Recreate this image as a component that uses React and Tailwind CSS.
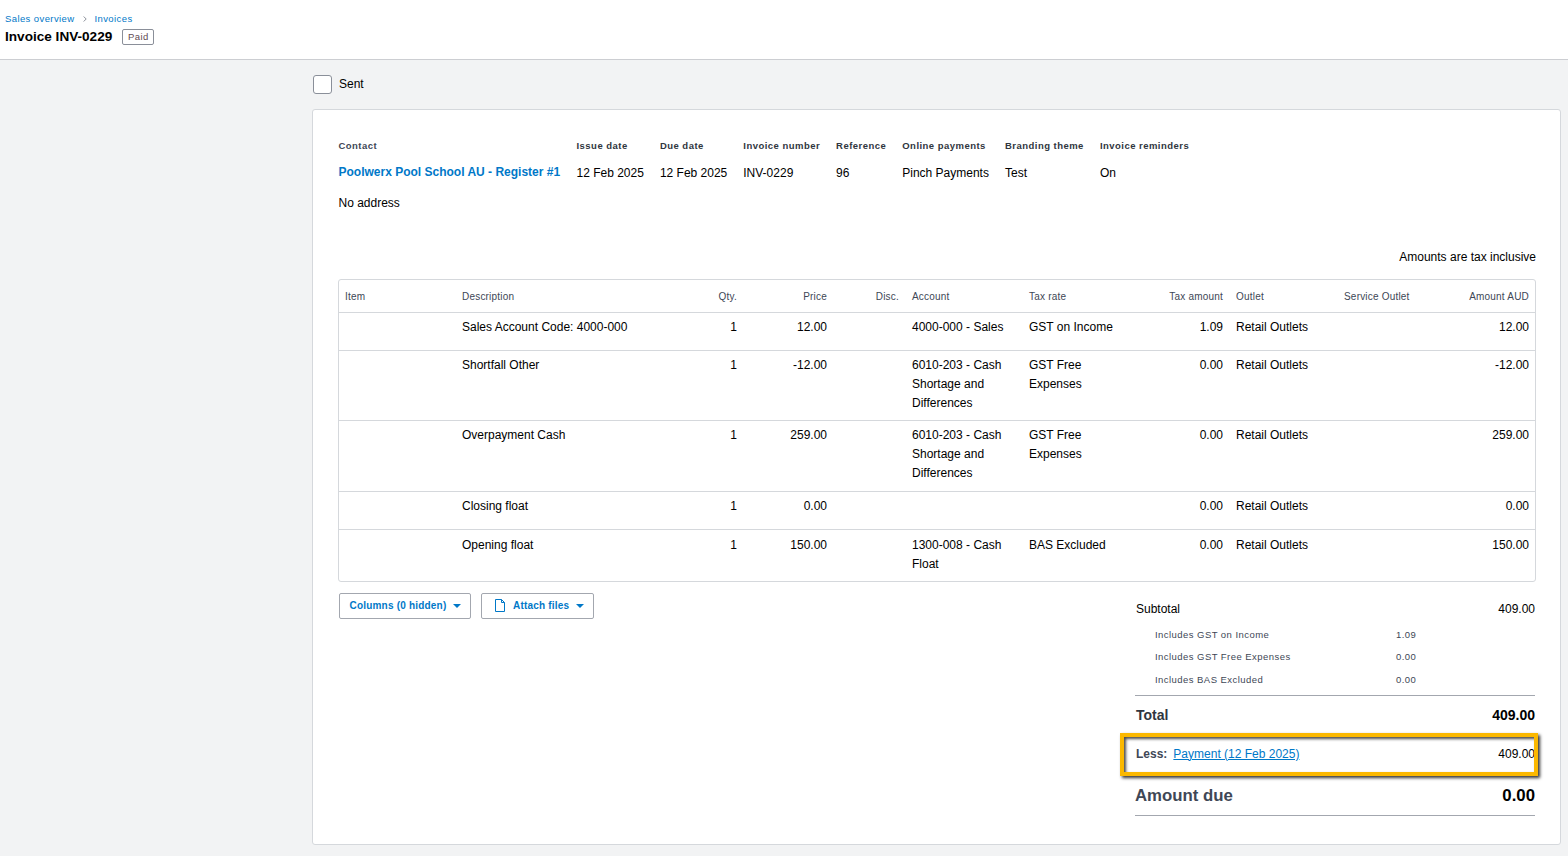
const grid = "grid grid-cols-[117px_238px_50px_90px_72px_117px_117px_90px_108px_115px_1fr]";
const rows = [
  { h: "h-[38px]", pt: "pt-[5px]", d: "Sales Account Code: 4000-000", q: "1", p: "12.00", a: ["4000-000 - Sales"], t: ["GST on Income"], ta: "1.09", amt: "12.00" },
  { h: "h-[70px]", pt: "pt-[5px]", d: "Shortfall Other", q: "1", p: "-12.00", a: ["6010-203 - Cash", "Shortage and", "Differences"], t: ["GST Free", "Expenses"], ta: "0.00", amt: "-12.00" },
  { h: "h-[71px]", pt: "pt-[5px]", d: "Overpayment Cash", q: "1", p: "259.00", a: ["6010-203 - Cash", "Shortage and", "Differences"], t: ["GST Free", "Expenses"], ta: "0.00", amt: "259.00" },
  { h: "h-[38px]", pt: "pt-[5px]", d: "Closing float", q: "1", p: "0.00", a: [], t: [], ta: "0.00", amt: "0.00" },
  { h: "h-[51px]", pt: "pt-[6px]", d: "Opening float", q: "1", p: "150.00", a: ["1300-008 - Cash", "Float"], t: ["BAS Excluded"], ta: "0.00", amt: "150.00" },
];
const meta = [
  ["Issue date", "12 Feb 2025"],
  ["Due date", "12 Feb 2025"],
  ["Invoice number", "INV-0229"],
  ["Reference", "96"],
  ["Online payments", "Pinch Payments"],
  ["Branding theme", "Test"],
  ["Invoice reminders", "On"],
];
function Caret() {
  return <span className="ml-[7px] w-0 h-0 border-x-[4px] border-x-transparent border-t-[4px] border-t-[#0078c8]" />;
}
function Head() {
  const c = "pl-[6px] pr-[7px] text-[10px] tracking-[0.2px] text-[#404756]";
  return (
    <div className={`${grid} h-[33px] items-center border-b border-[#d5d8dc]`}>
      <div className={c}>Item</div>
      <div className={c}>Description</div>
      <div className={`${c} text-right`}>Qty.</div>
      <div className={`${c} text-right`}>Price</div>
      <div className={`${c} text-right`}>Disc.</div>
      <div className={c}>Account</div>
      <div className={c}>Tax rate</div>
      <div className={`${c} text-right`}>Tax amount</div>
      <div className={c}>Outlet</div>
      <div className={c}>Service Outlet</div>
      <div className={`${c} text-right !pr-[6px]`}>Amount AUD</div>
    </div>
  );
}
function Row({ r, last }) {
  const c = `pl-[6px] pr-[7px] ${r.pt} text-xs leading-[19px] text-black`;
  return (
    <div className={`${grid} ${r.h} ${last ? "" : "border-b border-[#d5d8dc]"}`}>
      <div className={c}></div>
      <div className={c}>{r.d}</div>
      <div className={`${c} text-right`}>{r.q}</div>
      <div className={`${c} text-right`}>{r.p}</div>
      <div className={c}></div>
      <div className={c}>{r.a.map((x) => <div key={x}>{x}</div>)}</div>
      <div className={c}>{r.t.map((x) => <div key={x}>{x}</div>)}</div>
      <div className={`${c} text-right`}>{r.ta}</div>
      <div className={c}>Retail Outlets</div>
      <div className={c}></div>
      <div className={`${c} text-right !pr-[6px]`}>{r.amt}</div>
    </div>
  );
}
function Inc({ label, v, h }) {
  return (
    <div className={`flex items-center ${h} text-[9.5px] tracking-[0.45px] text-[#404756]`}>
      <div className="w-[261px] pl-[20px]">{label}</div>
      <div>{v}</div>
    </div>
  );
}
export default function App() {
  return (
    <div className="min-h-[856px] bg-[#f2f3f4] font-['Liberation_Sans',Arial,sans-serif]">
      <header className="h-[60px] bg-white border-b border-[#ccced2] pl-[5px] pt-[13px]">
        <nav className="flex items-center h-[12px] text-[9.5px] tracking-[0.4px] text-[#0078c8]">
          <span>Sales overview</span>
          <svg className="mx-[8px]" width="4" height="6" viewBox="0 0 4 6" fill="none" stroke="#8a8f99" strokeWidth="1"><path d="M.7.5 3.2 3 .7 5.5" /></svg>
          <span>Invoices</span>
        </nav>
        <div className="flex items-center mt-[4px] h-[16px]">
          <h1 className="text-[13.6px] font-bold text-black leading-none">Invoice INV-0229</h1>
          <span className="ml-[10px] h-[16px] w-[32px] flex items-center justify-center border border-[#8a8f99] rounded-[2px] text-[9.5px] tracking-[0.4px] text-[#5f4a52]">Paid</span>
        </div>
      </header>
      <main className="pl-[312px] pr-[7px]">
        <div className="flex items-center h-[49px] pl-px -mb-px">
          <div className="w-[19px] h-[19px] bg-white border border-[#8a8f99] rounded-[3px] -mt-px" />
          <span className="ml-[7px] text-xs text-black -mt-[2px]">Sent</span>
        </div>
        <section className="h-[736px] mt-px bg-white border border-[#d5d8dc] rounded-[3px] pl-[25px] pr-[24px] pt-[30px]">
          <div className="flex gap-4 h-[29px] pl-[0.5px]">
            <div className="w-[222px]">
              <div className="text-[9.5px] font-bold tracking-[0.45px] text-[#404756] leading-[12px]">Contact</div>
              <div className="mt-[12px] text-xs font-bold text-[#0078c8] leading-[16px]">Poolwerx Pool School AU - Register #1</div>
            </div>
            {meta.map(([l, v]) => (
              <div key={l}>
                <div className="text-[9.5px] font-bold tracking-[0.47px] text-[#303640] leading-[12px]">{l}</div>
                <div className="mt-[13px] text-xs text-black leading-[16px]">{v}</div>
              </div>
            ))}
          </div>
          <div className="mt-[26px] pl-[0.5px] text-xs text-black leading-[16px]">No address</div>
          <div className="mt-[38px] text-xs text-black text-right leading-[16px]">Amounts are tax inclusive</div>
          <div className="mt-[14px] border border-[#d5d8dc] rounded-[3px]">
            <Head />
            {rows.map((r, i) => <Row key={r.d} r={r} last={i === rows.length - 1} />)}
          </div>
          <div className="flex justify-between mt-[11px]">
            <div className="flex gap-[10px] pl-px h-[26px]">
              <button className="flex items-center h-[26px] w-[132px] pl-[9.5px] pb-px border border-[#a3a7af] rounded-[2px] bg-white text-[10px] font-bold tracking-[0.2px] text-[#0078c8]">
                Columns (0 hidden)<Caret />
              </button>
              <button className="flex items-center h-[26px] w-[113px] pl-[13px] pb-px border border-[#a3a7af] rounded-[2px] bg-white text-[10px] font-bold tracking-[0.2px] text-[#0078c8]">
                <svg className="mr-[8px]" width="10" height="13" viewBox="0 0 10 13" fill="none" stroke="#0078c8" strokeWidth="1"><path d="M.5.5h6l3 3v9h-9zM6.5.5v3h3" /></svg>
                Attach files<Caret />
              </button>
            </div>
            <div className="w-[400px] mr-px">
              <div className="flex justify-between items-center h-[31px] pl-px text-xs text-black"><span>Subtotal</span><span>409.00</span></div>
              <Inc label="Includes GST on Income" v="1.09" h="h-[22px]" />
              <Inc label="Includes GST Free Expenses" v="0.00" h="h-[23px]" />
              <Inc label="Includes BAS Excluded" v="0.00" h="h-[22px]" />
              <div className="mt-[4px] border-t border-[#a3a7af] flex justify-between items-center h-[39px] text-sm font-bold">
                <span className="pl-px text-[#303640]">Total</span><span className="text-black">409.00</span>
              </div>
              <div className="relative flex items-center h-[42px] pl-px pb-[3px] text-xs">
                <span className="font-bold text-[#404756]">Less:</span>
                <a className="ml-[6px] text-[#0078c8] underline">Payment (12 Feb 2025)</a>
                <span className="ml-auto text-black">409.00</span>
                <div className="absolute -left-[15px] -right-[3px] -top-px bottom-0 border-[4px] border-[#fbb800] shadow-[2px_2px_3px_rgba(0,0,0,0.8),inset_2px_2px_3px_rgba(0,0,0,0.7)]" />
              </div>
              <div className="flex justify-between items-center h-[40px] border-b border-[#a3a7af] font-bold text-[16.8px]">
                <span className="text-[#404756]">Amount due</span><span className="text-black">0.00</span>
              </div>
            </div>
          </div>
        </section>
      </main>
    </div>
  );
}
